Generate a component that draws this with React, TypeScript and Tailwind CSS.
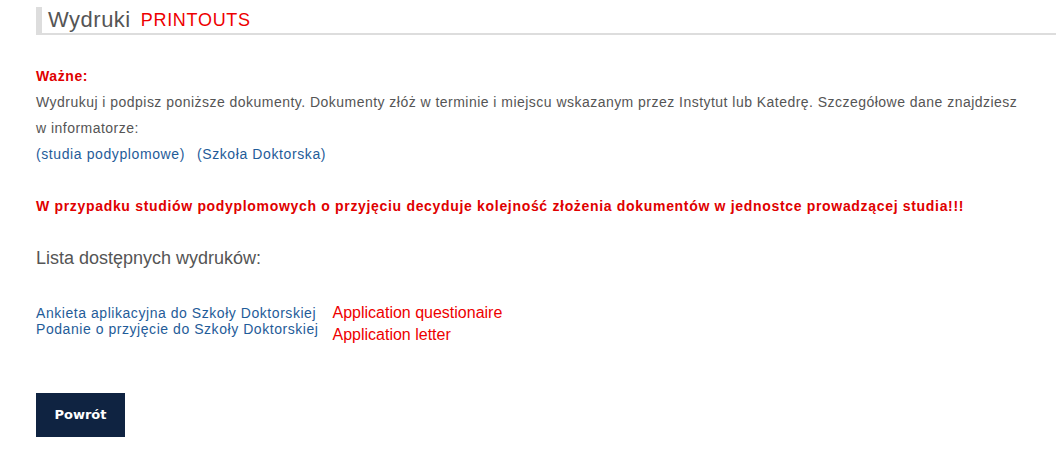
import React from 'react';

const printouts = [
  { pl: 'Ankieta aplikacyjna do Szkoły Doktorskiej', en: 'Application questionaire' },
  { pl: 'Podanie o przyjęcie do Szkoły Doktorskiej', en: 'Application letter' },
];

export default function App() {
  return (
    <div className="min-h-[452px] bg-white font-['Liberation_Sans',Arial,sans-serif] text-[#555]">
      <div className="pl-[36px] pr-[7px] pt-[7px]">
        {/* Page title */}
        <div className="flex items-center h-[28px] border-l-[6px] border-b-2 border-[#dddddd] pl-[6px]">
          <h1 className="text-[22px] leading-none tracking-[0.5px] text-[#555]">Wydruki</h1>
          <span className="ml-[10px] text-[18px] leading-none tracking-[0.7px] text-[#ee0000]">PRINTOUTS</span>
        </div>

        {/* Info */}
        <div className="mt-[28px] pr-[32px] text-[14px] leading-[26px]">
          <div className="font-bold tracking-[0.6px] text-[#e00000]">Ważne:</div>
          <p className="tracking-[0.47px]">
            Wydrukuj i podpisz poniższe dokumenty. Dokumenty złóż w terminie i miejscu wskazanym przez Instytut lub Katedrę. Szczegółowe dane znajdziesz w informatorze:
          </p>
          <div className="tracking-[0.6px] text-[#1f5c99]">
            <a href="#">(studia podyplomowe)</a>
            <a href="#" className="ml-[12px]">(Szkoła Doktorska)</a>
          </div>
        </div>

        <p className="mt-[26px] text-[14px] leading-[26px] font-bold tracking-[0.68px] text-[#e00000]">
          W przypadku studiów podyplomowych o przyjęciu decyduje kolejność złożenia dokumentów w jednostce prowadzącej studia!!!
        </p>

        <h2 className="mt-[26px] text-[18px] leading-[26px] text-[#555]">Lista dostępnych wydruków:</h2>

        {/* Printouts list */}
        <div className="mt-[31px] flex gap-[14px]">
          <div className="flex flex-col text-[14px] leading-[16px] tracking-[0.55px] text-[#1f5c99] pt-[3px]">
            {printouts.map((p) => (
              <a href="#" key={p.pl}>{p.pl}</a>
            ))}
          </div>
          <div className="flex flex-col text-[16px] leading-[22px] text-[#ee0000]">
            {printouts.map((p) => (
              <span key={p.en}>{p.en}</span>
            ))}
          </div>
        </div>

        <button className="mt-[47px] w-[89px] h-[44px] bg-[#0f2341] text-white text-[13px] font-bold font-['DejaVu_Sans',Verdana,sans-serif]">
          Powrót
        </button>
      </div>
    </div>
  );
}
